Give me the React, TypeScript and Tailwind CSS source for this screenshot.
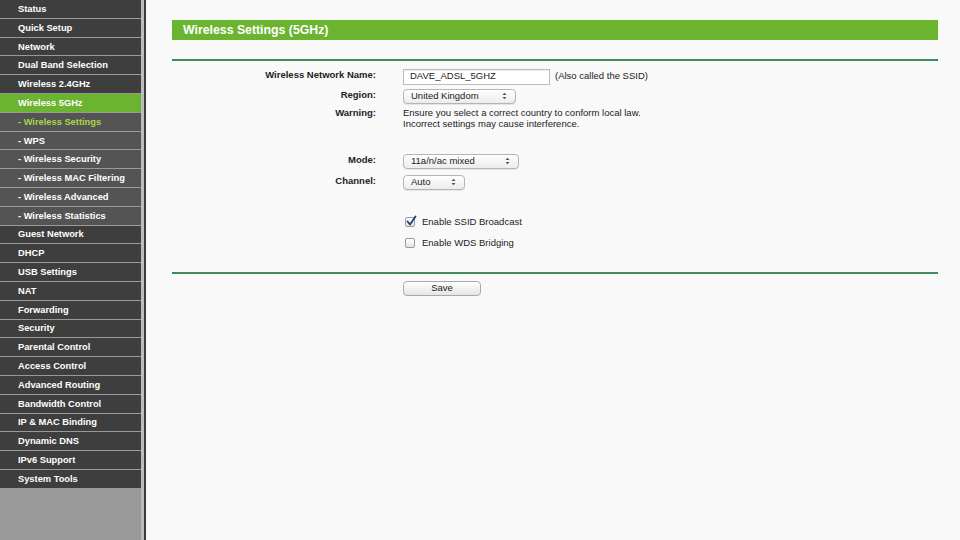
import React from 'react';

const menu: { label: string; kind: 'main' | 'sub' | 'active' | 'activeSub' }[] = [
  { label: 'Status', kind: 'main' },
  { label: 'Quick Setup', kind: 'main' },
  { label: 'Network', kind: 'main' },
  { label: 'Dual Band Selection', kind: 'main' },
  { label: 'Wireless 2.4GHz', kind: 'main' },
  { label: 'Wireless 5GHz', kind: 'active' },
  { label: '- Wireless Settings', kind: 'activeSub' },
  { label: '- WPS', kind: 'sub' },
  { label: '- Wireless Security', kind: 'sub' },
  { label: '- Wireless MAC Filtering', kind: 'sub' },
  { label: '- Wireless Advanced', kind: 'sub' },
  { label: '- Wireless Statistics', kind: 'sub' },
  { label: 'Guest Network', kind: 'main' },
  { label: 'DHCP', kind: 'main' },
  { label: 'USB Settings', kind: 'main' },
  { label: 'NAT', kind: 'main' },
  { label: 'Forwarding', kind: 'main' },
  { label: 'Security', kind: 'main' },
  { label: 'Parental Control', kind: 'main' },
  { label: 'Access Control', kind: 'main' },
  { label: 'Advanced Routing', kind: 'main' },
  { label: 'Bandwidth Control', kind: 'main' },
  { label: 'IP & MAC Binding', kind: 'main' },
  { label: 'Dynamic DNS', kind: 'main' },
  { label: 'IPv6 Support', kind: 'main' },
  { label: 'System Tools', kind: 'main' },
];

const itemBg = {
  main: 'bg-[#3e3e3e] text-white',
  sub: 'bg-[#545454] text-white',
  active: 'bg-[#6ab42f] text-white',
  activeSub: 'bg-[#545454] text-[#a6d84a]',
};

function Arrows() {
  return (
    <svg width="5" height="8" viewBox="0 0 5 8" className="shrink-0">
      <path d="M0.5 3 L2.5 0.8 L4.5 3 Z" fill="#555" />
      <path d="M0.5 5 L2.5 7.2 L4.5 5 Z" fill="#555" />
    </svg>
  );
}

function Select({ value, width }: { value: string; width: string }) {
  return (
    <div
      className={`${width} h-[15px] flex items-center justify-between pl-[7px] pr-[8px] rounded-[4px] border border-[#b5b5b5] bg-gradient-to-b from-white to-[#ececec] shadow-[0_1px_0_rgba(0,0,0,0.08)] text-[9.5px] text-[#222]`}
    >
      <span>{value}</span>
      <Arrows />
    </div>
  );
}

function Row({ label, children, className = '' }: { label: string; children: React.ReactNode; className?: string }) {
  return (
    <div className={`flex items-start ${className}`}>
      <div className="w-[204px] text-right font-bold text-[9.5px] leading-[12px] text-[#222]">{label}</div>
      <div className="ml-[27px]">{children}</div>
    </div>
  );
}

export default function App() {
  return (
    <div className="w-[960px] h-[540px] flex overflow-hidden bg-[#f9f9f9]" style={{ fontFamily: '"Liberation Sans", Arial, sans-serif' }}>
      <div className="flex shrink-0">
        <div className="w-[141px] h-full bg-[#9a9a9a]">
          {menu.map((m) => (
            <div
              key={m.label}
              className={`h-[18.8px] border-b border-[#999] flex items-center pl-[18px] pt-[2px] font-bold text-[9.3px] ${itemBg[m.kind]}`}
            >
              {m.label}
            </div>
          ))}
        </div>
        <div className="w-[3px] h-full bg-[#bdbdbd]" />
        <div className="w-[2px] h-full bg-[#3a3a3a]" />
      </div>

      <div className="flex-1 pl-[26px] pr-[22px] pt-[20px]">
        <div className="h-[20px] bg-[#6ab42f] flex items-center pl-[11px] text-white font-bold text-[12.3px]">
          Wireless Settings (5GHz)
        </div>
        <div className="mt-[19px] h-[1.5px] bg-[#3b8d5b]" />

        <div className="pt-[8px]">
          <Row label="Wireless Network Name:" className="items-center">
            <div className="flex items-center">
              <div className="w-[147px] h-[16px] border border-[#bdbdbd] bg-white flex items-center pl-[6px] text-[9.5px] text-[#222] shadow-[inset_0_1px_1px_rgba(0,0,0,0.08)]">
                DAVE_ADSL_5GHZ
              </div>
              <span className="ml-[5px] text-[9.5px] text-[#222]">(Also called the SSID)</span>
            </div>
          </Row>
          <Row label="Region:" className="mt-[4px] items-center">
            <Select value="United Kingdom" width="w-[113px]" />
          </Row>
          <Row label="Warning:" className="mt-[3px]">
            <div className="text-[9.5px] leading-[11px] text-[#222]">
              <div>Ensure you select a correct country to conform local law.</div>
              <div>Incorrect settings may cause interference.</div>
            </div>
          </Row>
          <Row label="Mode:" className="mt-[25px] items-center">
            <Select value="11a/n/ac mixed" width="w-[116px]" />
          </Row>
          <Row label="Channel:" className="mt-[6px] items-center">
            <Select value="Auto" width="w-[62px]" />
          </Row>

          <div className="ml-[233px] mt-[25px] flex items-center gap-[7px] text-[9.5px] text-[#222]">
            <div className="w-[10px] h-[10px] rounded-[2px] border border-[#9a9a9a] bg-gradient-to-b from-white to-[#e4e4e4] relative">
              <svg width="12" height="12" viewBox="0 0 12 12" className="absolute -left-[1px] -top-[3px]">
                <path d="M2.5 6.5 L5 9.5 L10.5 1.5" stroke="#1f3f74" strokeWidth="1.8" fill="none" strokeLinecap="round" strokeLinejoin="round" />
              </svg>
            </div>
            <span>Enable SSID Broadcast</span>
          </div>
          <div className="ml-[233px] mt-[7px] flex items-center gap-[7px] text-[9.5px] text-[#222]">
            <div className="w-[10px] h-[10px] rounded-[2px] border border-[#9a9a9a] bg-gradient-to-b from-white to-[#e4e4e4]" />
            <span>Enable WDS Bridging</span>
          </div>
        </div>

        <div className="mt-[22px] h-[1.5px] bg-[#3b8d5b]" />
        <div className="ml-[231px] mt-[7px] w-[78px] h-[15px] rounded-[4px] border border-[#a9a9a9] bg-gradient-to-b from-white to-[#e6e6e6] flex items-center justify-center text-[9.5px] text-[#222]">
          Save
        </div>
      </div>
    </div>
  );
}
